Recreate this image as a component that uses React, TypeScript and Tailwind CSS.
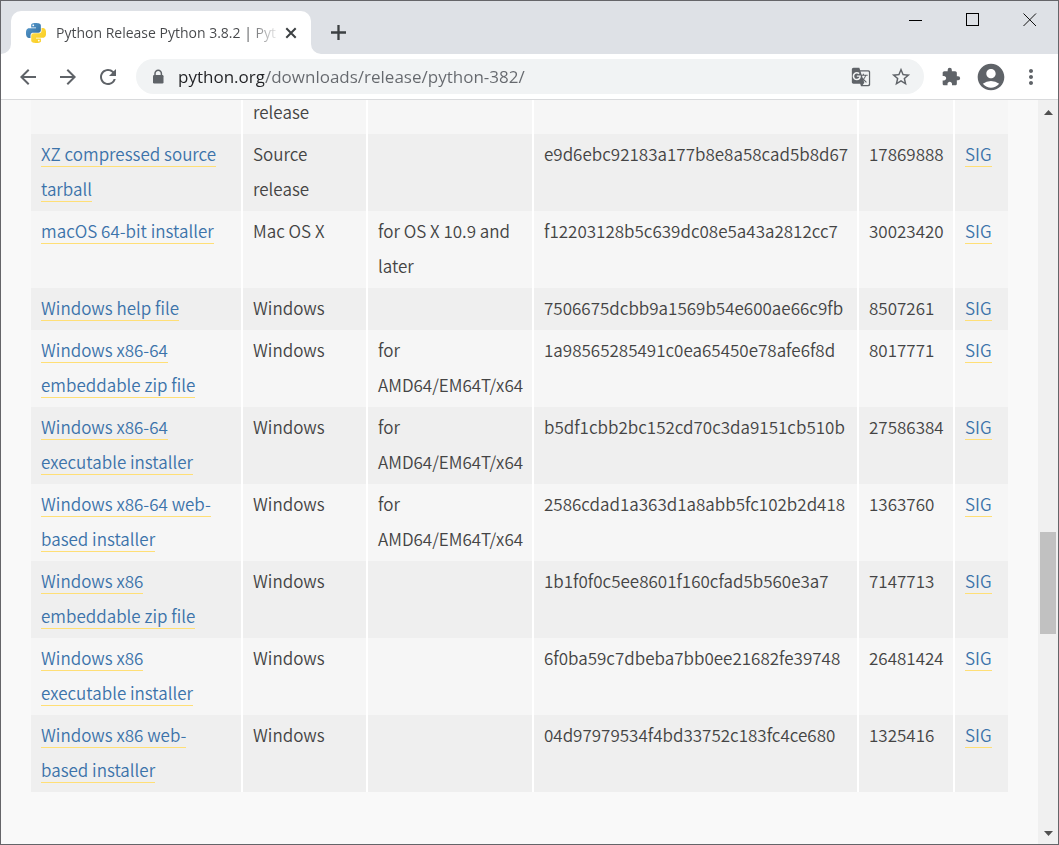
import React from "react";
import {
  MdAccountCircle,
  MdArrowBack,
  MdArrowForward,
  MdExtension,
  MdGTranslate,
  MdMoreVert,
  MdRefresh,
  MdStarBorder,
} from "react-icons/md";

type Download = {
  name: string;
  os: string;
  note?: string;
  md5: string;
  size: string;
};

const downloads: Download[] = [
  { name: "XZ compressed source tarball", os: "Source release", md5: "e9d6ebc92183a177b8e8a58cad5b8d67", size: "17869888" },
  { name: "macOS 64-bit installer", os: "Mac OS X", note: "for OS X 10.9 and later", md5: "f12203128b5c639dc08e5a43a2812cc7", size: "30023420" },
  { name: "Windows help file", os: "Windows", md5: "7506675dcbb9a1569b54e600ae66c9fb", size: "8507261" },
  { name: "Windows x86-64 embeddable zip file", os: "Windows", note: "for AMD64/EM64T/x64", md5: "1a98565285491c0ea65450e78afe6f8d", size: "8017771" },
  { name: "Windows x86-64 executable installer", os: "Windows", note: "for AMD64/EM64T/x64", md5: "b5df1cbb2bc152cd70c3da9151cb510b", size: "27586384" },
  { name: "Windows x86-64 web-based installer", os: "Windows", note: "for AMD64/EM64T/x64", md5: "2586cdad1a363d1a8abb5fc102b2d418", size: "1363760" },
  { name: "Windows x86 embeddable zip file", os: "Windows", md5: "1b1f0f0c5ee8601f160cfad5b560e3a7", size: "7147713" },
  { name: "Windows x86 executable installer", os: "Windows", md5: "6f0ba59c7dbeba7bb0ee21682fe39748", size: "26481424" },
  { name: "Windows x86 web-based installer", os: "Windows", md5: "04d97979534f4bd33752c183fc4ce680", size: "1325416" },
];

function PythonLogo() {
  return (
    <svg viewBox="0 0 24 24" className="size-5 shrink-0" aria-hidden="true">
      <defs>
        <linearGradient id="py-blue" x1="0" y1="0" x2="1" y2="1">
          <stop offset="0" stopColor="#5a9fd4" />
          <stop offset="1" stopColor="#306998" />
        </linearGradient>
        <linearGradient id="py-yellow" x1="0" y1="0" x2="1" y2="1">
          <stop offset="0" stopColor="#ffdc4e" />
          <stop offset="1" stopColor="#f7cb1c" />
        </linearGradient>
      </defs>
      <path
        fill="url(#py-blue)"
        d="M14.25.18l.9.2.73.26.59.3.45.32.34.34.25.34.16.33.1.3.04.26.02.2-.01.13V8.5l-.05.63-.13.55-.21.46-.26.38-.3.31-.33.25-.35.19-.35.14-.33.1-.3.07-.26.04-.21.02H8.77l-.69.05-.59.14-.5.22-.41.27-.33.32-.27.35-.2.36-.15.37-.1.35-.07.32-.04.27-.02.21v3.06H3.17l-.21-.03-.28-.07-.32-.12-.35-.18-.36-.26-.36-.36-.35-.46-.32-.59-.28-.73-.21-.88-.14-1.05-.05-1.23.06-1.22.16-1.04.24-.87.32-.71.36-.57.4-.44.42-.33.42-.24.4-.16.36-.1.32-.05.24-.01h.16l.06.01h8.16v-.83H6.18l-.01-2.75-.02-.37.05-.34.11-.31.17-.28.25-.26.31-.23.38-.2.44-.18.51-.15.58-.12.64-.1.71-.06.77-.04.84-.02 1.27.05zm-6.3 1.98l-.23.33-.08.41.08.41.23.34.33.22.41.09.41-.09.33-.22.23-.34.08-.41-.08-.41-.23-.33-.33-.22-.41-.09-.41.09z"
      />
      <path
        fill="url(#py-yellow)"
        d="M21.1 6.11l.28.06.32.12.35.18.36.27.36.35.35.47.32.59.28.73.21.88.14 1.04.05 1.23-.06 1.23-.16 1.04-.24.86-.32.71-.36.57-.4.45-.42.33-.42.24-.4.16-.36.09-.32.05-.24.02-.16-.01h-8.22v.82h5.84l.01 2.76.02.36-.05.34-.11.31-.17.29-.25.25-.31.24-.38.2-.44.17-.51.15-.58.13-.64.09-.71.07-.77.04-.84.01-1.27-.04-1.07-.14-.9-.2-.73-.25-.59-.3-.45-.33-.34-.34-.25-.34-.16-.33-.1-.3-.04-.25-.02-.2.01-.13v-5.34l.05-.64.13-.54.21-.46.26-.38.3-.32.33-.24.35-.2.35-.14.33-.1.3-.06.26-.04.21-.02.13-.01h5.84l.69-.05.59-.14.5-.21.41-.28.33-.32.27-.35.2-.36.15-.36.1-.35.07-.32.04-.28.02-.21V6.07h2.09l.14.01zm-6.47 14.25l-.23.33-.08.41.08.41.23.33.33.23.41.08.41-.08.33-.23.23-.33.08-.41-.08-.41-.23-.33-.33-.23-.41-.08-.41.08z"
      />
    </svg>
  );
}

function TabStrip() {
  return (
    <div className="flex h-[53px] shrink-0 items-end bg-[#dee1e6]">
      <svg viewBox="0 0 10 10" className="size-2.5 shrink-0" aria-hidden="true">
        <path d="M0 10A10 10 0 0 0 10 0V10Z" fill="#fff" />
      </svg>
      <div className="flex h-[43px] w-[300px] shrink-0 items-center rounded-t-[10px] bg-white pr-[11px] pl-[15px]">
        <PythonLogo />
        <span className="ml-2.5 bg-[linear-gradient(90deg,#45474a_190px,#45474a20_220px)] bg-clip-text text-sm leading-6 whitespace-nowrap text-transparent">
          Python Release Python 3.8.2 | Pyt
        </span>
        <button type="button" aria-label="Close tab" className="ml-auto text-[#3c4043]">
          <svg viewBox="0 0 18 18" className="size-[18px]" fill="none" stroke="currentColor" strokeWidth="2">
            <path d="M4.300 4.300L13.700 13.700M13.700 4.300L4.300 13.700" />
          </svg>
        </button>
      </div>
      <svg viewBox="0 0 10 10" className="size-2.5 shrink-0" aria-hidden="true">
        <path d="M10 10A10 10 0 0 1 0 0V10Z" fill="#fff" />
      </svg>
      <button type="button" aria-label="New tab" className="mb-2.5 ml-[5px] text-[#3c4043]">
        <svg viewBox="0 0 24 24" className="size-6" fill="none" stroke="currentColor" strokeWidth="2.300">
          <path d="M12.500 5V20M5 12.500H20" />
        </svg>
      </button>
      <div className="ml-auto flex self-start pt-[7px]">
        <button type="button" aria-label="Minimize" className="flex h-6 w-[57px] items-center justify-center">
          <svg viewBox="0 0 14 14" className="size-3.5" shapeRendering="crispEdges">
            <path d="M0 7.5H13" stroke="#000" />
          </svg>
        </button>
        <button type="button" aria-label="Maximize" className="flex h-6 w-[57px] items-center justify-center">
          <svg viewBox="0 0 14 14" className="size-3.5" shapeRendering="crispEdges">
            <path d="M.5.5H12.5V12.5H.5Z" fill="none" stroke="#000" />
          </svg>
        </button>
        <button type="button" aria-label="Close window" className="flex h-6 w-[57px] items-center justify-center">
          <svg viewBox="0 0 14 14" className="size-3.5">
            <path d="M.5.5L13 13M13 .5L.5 13" stroke="#111" />
          </svg>
        </button>
      </div>
    </div>
  );
}

function Toolbar() {
  return (
    <div className="flex h-[46px] shrink-0 items-center border-b border-[#d9dadc] bg-white px-[15px] text-[#5f6368]">
      <button type="button" aria-label="Back">
        <MdArrowBack className="size-6" />
      </button>
      <button type="button" aria-label="Forward" className="ml-4">
        <MdArrowForward className="size-6" />
      </button>
      <button type="button" aria-label="Reload" className="ml-4">
        <MdRefresh className="size-6" />
      </button>
      <div className="ml-4 flex h-[35px] min-w-0 grow items-center rounded-full bg-[#f1f3f4] pr-3 pl-3.5">
        <svg viewBox="0 0 16 16" className="size-4 shrink-0" aria-hidden="true">
          <path d="M5 7V4.500a3.200 3.200 0 0 1 6.400 0V7" fill="none" stroke="currentColor" strokeWidth="1.500" />
          <rect x="3" y="6" width="10.500" height="8.500" rx="1.200" fill="currentColor" />
        </svg>
        <input
          aria-label="Address"
          type="text"
          defaultValue="python.org/downloads/release/python-382/"
          className="ml-3 h-7 min-w-0 grow bg-[linear-gradient(90deg,#202124_86px,#65686d_86px)] bg-clip-text text-[17px] text-transparent outline-none"
        />
        <button type="button" aria-label="Translate this page">
          <MdGTranslate className="size-5" />
        </button>
        <button type="button" aria-label="Bookmark this page" className="ml-[19px]">
          <MdStarBorder className="size-[22px]" />
        </button>
      </div>
      <button type="button" aria-label="Extensions" className="ml-[17px]">
        <MdExtension className="size-5" />
      </button>
      <button type="button" aria-label="Profile" className="ml-3.5">
        <MdAccountCircle className="size-8" />
      </button>
      <button type="button" aria-label="Menu" className="ml-3">
        <MdMoreVert className="size-6" />
      </button>
    </div>
  );
}

function Scrollbar() {
  return (
    <div className="flex w-5 shrink-0 flex-col bg-[#f0f0f0] px-0.5">
      <button type="button" aria-label="Scroll up" className="flex h-6 items-center justify-center">
        <svg viewBox="0 0 9 5" className="h-[5px] w-[9px]">
          <path d="M4.500 0L9 5H0Z" fill="#505050" />
        </svg>
      </button>
      <div className="flex-[408]" />
      <div className="flex-[102] bg-[#c1c1c1]" />
      <div className="flex-[188]" />
      <button type="button" aria-label="Scroll down" className="flex h-[22px] items-center justify-center">
        <svg viewBox="0 0 9 5" className="h-[5px] w-[9px]">
          <path d="M0 0H9L4.500 5Z" fill="#505050" />
        </svg>
      </button>
    </div>
  );
}

function Cell({ children }: { children?: React.ReactNode }) {
  return (
    <td className="border-r-2 border-white px-2.5 pt-0.5 pb-[5px] align-top last:border-r-0">{children}</td>
  );
}

function PageLink({ children }: { children: React.ReactNode }) {
  return (
    <a
      href="#download"
      className="border-b border-[#ffdf76] text-[#3c73aa]"
    >
      {children}
    </a>
  );
}

function DownloadTable() {
  return (
    <table className="-mt-2 w-full table-fixed border-separate border-spacing-0 font-['Noto_Sans_CJK_SC',sans-serif] text-[17px] leading-[35px] font-[350] text-[#444]">
      <colgroup>
        <col className="w-[212px]" />
        <col className="w-[125px]" />
        <col className="w-[166px]" />
        <col className="w-[325px]" />
        <col className="w-[96px]" />
        <col />
      </colgroup>
      <tbody>
        <tr className="bg-[#f6f6f6]">
          <Cell />
          <Cell>release</Cell>
          <Cell />
          <Cell />
          <Cell />
          <Cell />
        </tr>
        {downloads.map((d) => (
          <tr key={d.md5} className="odd:bg-[#f6f6f6] even:bg-[#efefef]">
            <Cell>
              <PageLink>{d.name}</PageLink>
            </Cell>
            <Cell>{d.os}</Cell>
            <Cell>{d.note}</Cell>
            <Cell>{d.md5}</Cell>
            <Cell>{d.size}</Cell>
            <Cell>
              <PageLink>SIG</PageLink>
            </Cell>
          </tr>
        ))}
      </tbody>
    </table>
  );
}

export default function App() {
  return (
    <div className="flex h-screen flex-col border border-[#656569] bg-white font-['Open_Sans',sans-serif]">
      <TabStrip />
      <Toolbar />
      <div className="flex min-h-0 grow">
        <main className="min-w-0 grow overflow-hidden bg-[#f9f9f9] px-[30px]">
          <DownloadTable />
        </main>
        <Scrollbar />
      </div>
    </div>
  );
}
